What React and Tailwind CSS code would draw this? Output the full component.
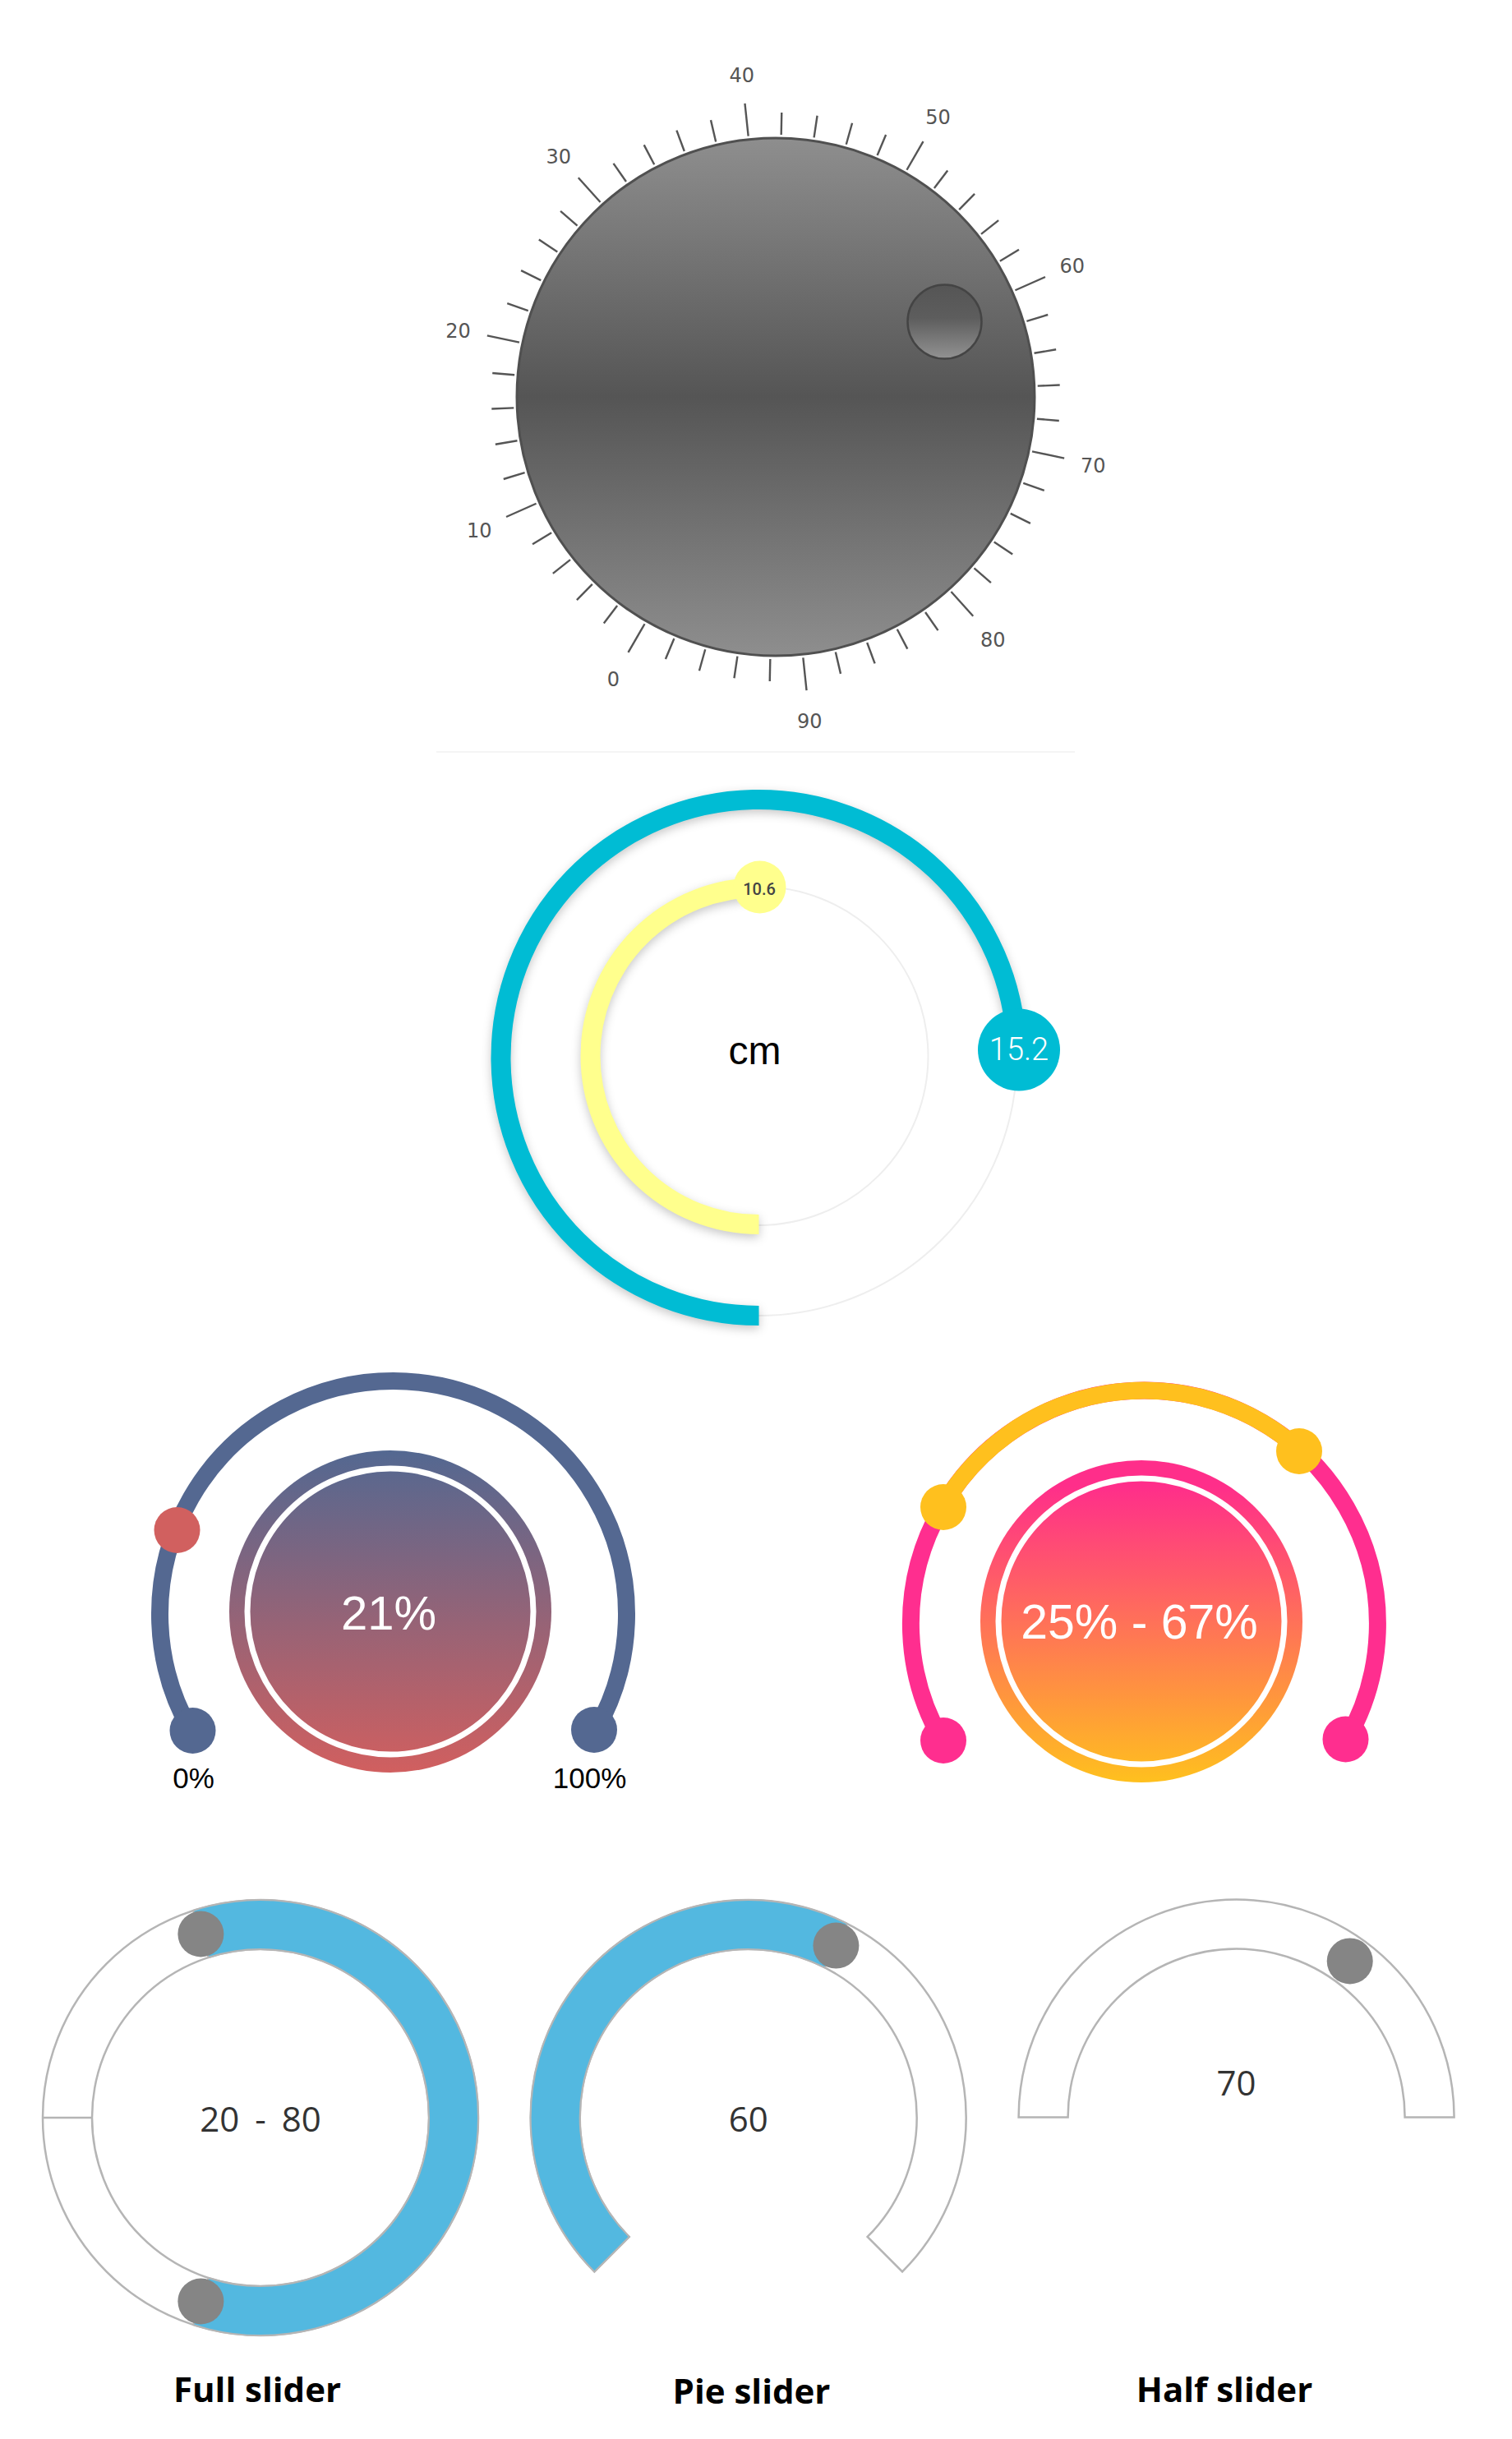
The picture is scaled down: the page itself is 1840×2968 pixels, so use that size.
import React from 'react';

// clockwise from 12 o'clock
const polar = (cx, cy, r, deg) => {
  const a = (deg * Math.PI) / 180;
  return [cx + r * Math.sin(a), cy - r * Math.cos(a)];
};

const arc = (cx, cy, r, from, to) => {
  const [x0, y0] = polar(cx, cy, r, from);
  const [x1, y1] = polar(cx, cy, r, to);
  const large = Math.abs(to - from) > 180 ? 1 : 0;
  const sweep = to > from ? 1 : 0;
  return `M${x0} ${y0}A${r} ${r} 0 ${large} ${sweep} ${x1} ${y1}`;
};

const band = (cx, cy, outer, inner, from, to) => {
  const [x0, y0] = polar(cx, cy, outer, from);
  const [x1, y1] = polar(cx, cy, outer, to);
  const [x2, y2] = polar(cx, cy, inner, to);
  const [x3, y3] = polar(cx, cy, inner, from);
  const large = Math.abs(to - from) > 180 ? 1 : 0;
  return `M${x0} ${y0}A${outer} ${outer} 0 ${large} 1 ${x1} ${y1}L${x2} ${y2}A${inner} ${inner} 0 ${large} 0 ${x3} ${y3}Z`;
};

const Knob = () => {
  const cx = 944;
  const cy = 483;
  const ticks = Array.from({ length: 50 }, (_, i) => i * 2);
  const labels = [0, 10, 20, 30, 40, 50, 60, 70, 80, 90];
  return (
    <svg width="830" height="914" viewBox="530 0 830 914">
      <defs>
        <linearGradient id="knobBody" x1="0" y1="0" x2="0" y2="1">
          <stop offset="0" stopColor="#8e8e8e" />
          <stop offset="0.5" stopColor="#555555" />
          <stop offset="1" stopColor="#8e8e8e" />
        </linearGradient>
        <linearGradient id="knobHandle" x1="0" y1="0" x2="0" y2="1">
          <stop offset="0" stopColor="#555555" />
          <stop offset="0.45" stopColor="#5d5d5d" />
          <stop offset="1" stopColor="#929292" />
        </linearGradient>
      </defs>
      {ticks.map((v) => {
        const deg = -150 + 3.6 * v;
        const [x0, y0] = polar(cx, cy, 319, deg);
        const [x1, y1] = polar(cx, cy, v % 10 === 0 ? 359 : 346, deg);
        return <line key={v} x1={x0} y1={y0} x2={x1} y2={y1} stroke="#555555" strokeWidth="2.4" />;
      })}
      {labels.map((v) => {
        const [x, y] = polar(cx, cy, 395, -150 + 3.6 * v);
        return (
          <text
            key={v}
            x={x}
            y={y + 2}
            textAnchor="middle"
            dominantBaseline="central"
            className="fill-[#555555] font-['DejaVu_Sans',sans-serif] text-[24px]"
          >
            {v}
          </text>
        );
      })}
      <circle cx={cx} cy={cy} r="315" fill="url(#knobBody)" stroke="#505050" strokeWidth="3" />
      <circle cx="1149.5" cy="391.5" r="45" fill="url(#knobHandle)" stroke="#444444" strokeWidth="2.5" />
    </svg>
  );
};

const DoubleDial = () => {
  const cx = 923.5;
  return (
    <svg width="760" height="734" viewBox="560 916 760 734">
      <circle cx={cx} cy="1287" r="314" fill="none" stroke="#eeeeee" strokeWidth="2" />
      <circle cx={cx} cy="1285" r="206" fill="none" stroke="#eeeeee" strokeWidth="2" />
      <path
        d={arc(cx, 1287, 314, 180, 448)}
        fill="none"
        stroke="#00bcd4"
        strokeWidth="24"
        className="drop-shadow-[0_4px_6px_rgba(0,0,0,0.22)]"
      />
      <path
        d={arc(cx, 1285, 205, 180, 360)}
        fill="none"
        stroke="#ffff8d"
        strokeWidth="24"
        className="drop-shadow-[0_4px_6px_rgba(0,0,0,0.22)]"
      />
      <circle cx="1240" cy="1277.5" r="50" fill="#00bcd4" />
      <circle cx="924.5" cy="1079.5" r="32" fill="#ffff8d" />
      <text
        x="1240"
        y="1277"
        textAnchor="middle"
        dominantBaseline="central"
        className="fill-white font-['Roboto',sans-serif] text-[38px] font-light"
      >
        15.2
      </text>
      <text
        x="924"
        y="1082"
        textAnchor="middle"
        dominantBaseline="central"
        className="fill-[#444444] font-['Roboto',sans-serif] text-[20px] font-medium"
      >
        10.6
      </text>
      <text
        x="918.5"
        y="1278"
        textAnchor="middle"
        dominantBaseline="central"
        className="fill-black font-['Liberation_Sans',sans-serif] text-[48px]"
      >
        cm
      </text>
    </svg>
  );
};

const GradientGauge = ({ id, viewBox, cx, cy, track, from, to, hold, fillX, fillY, children }) => (
  <svg width="660" height="590" viewBox={viewBox}>
    <defs>
      <linearGradient id={id} x1="0" y1="0" x2="0" y2="1">
        <stop offset="0" stopColor={from} />
        <stop offset={hold} stopColor={from} />
        <stop offset="1" stopColor={to} />
      </linearGradient>
    </defs>
    <path d={arc(cx, cy, 284, -120, 120)} fill="none" stroke={track} strokeWidth="21" />
    <circle cx={fillX} cy={fillY} r="196" fill={`url(#${id})`} />
    <circle cx={fillX} cy={fillY} r="174" fill="none" stroke="#ffffff" strokeWidth="7" />
    {children}
  </svg>
);

const sliderText = "fill-[#333333] font-['Open_Sans',sans-serif] text-[42px]";
const R_OUT = 265;
const R_IN = 205;

const Handle = ({ cx, cy, deg }) => {
  const [x, y] = polar(cx, cy, 235, deg);
  return <circle cx={x} cy={y} r="28" fill="#858585" />;
};

const Ring = ({ cx, cy, from, to }) => (
  <path d={band(cx, cy, R_OUT, R_IN, from, to)} fill="#ffffff" stroke="#b5b5b5" strokeWidth="2.5" />
);

const FullSlider = () => {
  const cx = 317;
  const cy = 2577;
  return (
    <svg width="570" height="570" viewBox="30 2290 570 570">
      <circle cx={cx} cy={cy} r={R_OUT} fill="none" stroke="#b5b5b5" strokeWidth="2.5" />
      <circle cx={cx} cy={cy} r={R_IN} fill="none" stroke="#b5b5b5" strokeWidth="2.5" />
      <line x1={cx - R_OUT} y1={cy} x2={cx - R_IN} y2={cy} stroke="#b5b5b5" strokeWidth="2.5" />
      <path d={band(cx, cy, R_OUT, R_IN, -18, 198)} fill="#53b8e0" stroke="#b5b5b5" strokeWidth="2" />
      <Handle cx={cx} cy={cy} deg={-18} />
      <Handle cx={cx} cy={cy} deg={198} />
      <text x={cx} y="2577" textAnchor="middle" dominantBaseline="central" className={`${sliderText} [word-spacing:8px]`}>
        20 - 80
      </text>
    </svg>
  );
};

const PieSlider = () => {
  const cx = 910.7;
  const cy = 2577;
  return (
    <svg width="580" height="570" viewBox="620 2290 580 570">
      <Ring cx={cx} cy={cy} from={-135} to={135} />
      <path d={band(cx, cy, R_OUT, R_IN, -135, 27)} fill="#53b8e0" stroke="#b5b5b5" strokeWidth="2" />
      <Handle cx={cx} cy={cy} deg={27} />
      <text x={cx} y="2577" textAnchor="middle" dominantBaseline="central" className={sliderText}>
        60
      </text>
    </svg>
  );
};

const HalfSlider = () => {
  const cx = 1504.6;
  const cy = 2576.6;
  return (
    <svg width="570" height="570" viewBox="1220 2290 570 570">
      <Ring cx={cx} cy={cy} from={-90} to={90} />
      <Handle cx={cx} cy={cy} deg={36} />
      <text x={cx} y="2533" textAnchor="middle" dominantBaseline="central" className={sliderText}>
        70
      </text>
    </svg>
  );
};

export default function App() {
  const sans = "font-['Liberation_Sans',sans-serif]";
  return (
    <div className="w-[1840px] h-[2968px] bg-white flex flex-col overflow-hidden">
      <div className="pl-[530px] h-[914px] flex">
        <Knob />
      </div>
      <div className="ml-[531px] w-[777px] h-[2px] bg-[#f4f4f4]" />
      <div className="pl-[560px] h-[734px] flex">
        <DoubleDial />
      </div>
      <div className="pl-[160px] h-[590px] flex gap-[260px]">
        <GradientGauge
          id="gaugeBlue"
          viewBox="160 1650 660 590"
          cx={478.5}
          cy={1964.5}
          track="#546891"
          from="#536891"
          to="#d15f5f"
          hold="0"
          fillX={475}
          fillY={1961}
        >
          <circle cx="234.5" cy="2106" r="28" fill="#546891" />
          <circle cx="723" cy="2105" r="28" fill="#546891" />
          <circle cx="215.5" cy="1862" r="28" fill="#d1605f" />
          <text x="473" y="1962" textAnchor="middle" dominantBaseline="central" className={`fill-white ${sans} text-[58px]`}>
            21%
          </text>
          <text x="235.5" y="2163" textAnchor="middle" dominantBaseline="central" className={`fill-black ${sans} text-[35px]`}>
            0%
          </text>
          <text x="717.5" y="2163" textAnchor="middle" dominantBaseline="central" className={`fill-black ${sans} text-[35px]`}>
            100%
          </text>
        </GradientGauge>
        <GradientGauge
          id="gaugePink"
          viewBox="1080 1650 660 590"
          cx={1392.4}
          cy={1976}
          track="#ff2e8f"
          from="#ff2e8a"
          to="#ffc01e"
          hold="0.08"
          fillX={1389}
          fillY={1973}
        >
          <path d={arc(1392.4, 1976, 284, -60, 42)} fill="none" stroke="#ffc01e" strokeWidth="21" />
          <circle cx="1148" cy="2118" r="28" fill="#ff2e8f" />
          <circle cx="1637.5" cy="2116.5" r="28" fill="#ff2e8f" />
          <circle cx="1148" cy="1834" r="28" fill="#ffc01e" />
          <circle cx="1581" cy="1766" r="28" fill="#ffc01e" />
          <text x="1386.5" y="1974" textAnchor="middle" dominantBaseline="central" className={`fill-white ${sans} text-[59px]`}>
            25% - 67%
          </text>
        </GradientGauge>
      </div>
      <div className="mt-[50px] pl-[30px] h-[570px] flex gap-[20px]">
        <FullSlider />
        <PieSlider />
        <HalfSlider />
      </div>
      <div className="mt-[18px] pl-[30px] flex gap-[20px] font-['Open_Sans',sans-serif] text-[42px] font-bold leading-[58px] text-black">
        <div className="w-[566px] text-center">Full slider</div>
        <div className="w-[597px] text-center pt-[2px]">Pie slider</div>
        <div className="w-[514px] text-center">Half slider</div>
      </div>
    </div>
  );
}
